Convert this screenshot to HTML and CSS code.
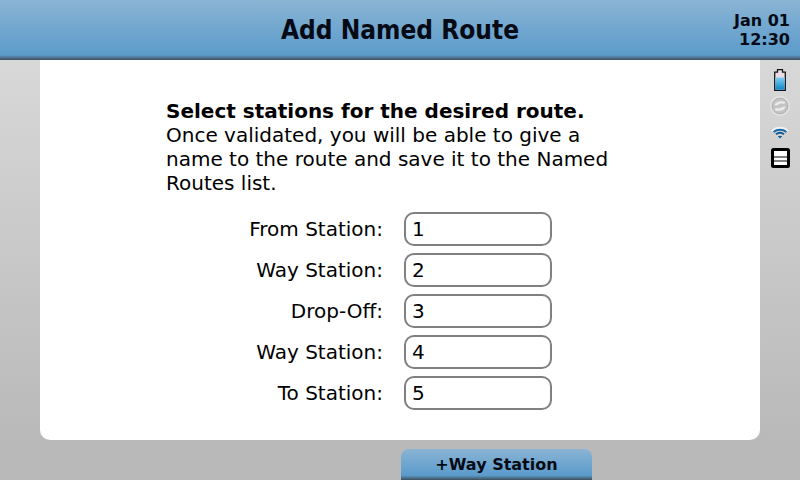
FILE: index.html
```html
<!DOCTYPE html>
<html>
<head>
  <title>Add Named Route</title>
  <link rel="stylesheet" href="styles.css">
</head>
<body>
  <div class="header">
    <h1 class="title">Add Named Route</h1>
    <div class="clock">Jan 01<br>12:30</div>
  </div>

  <div class="main">
    <div class="card">
      <p class="intro">
        <b>Select stations for the desired route.</b><br>
        Once validated, you will be able to give a<br>
        name to the route and save it to the Named<br>
        Routes list.
      </p>

      <div class="form">
        <label class="label">From Station:</label>
        <input class="field" type="text" value="1">
        <label class="label">Way Station:</label>
        <input class="field" type="text" value="2">
        <label class="label">Drop-Off:</label>
        <input class="field" type="text" value="3">
        <label class="label">Way Station:</label>
        <input class="field" type="text" value="4">
        <label class="label">To Station:</label>
        <input class="field" type="text" value="5">
      </div>
    </div>

    <div class="status">
      <!-- battery -->
      <svg width="12" height="22" viewBox="0 0 12 22">
        <defs>
          <linearGradient id="charge" x1="0" y1="0" x2="0" y2="1">
            <stop offset="0" stop-color="#7fd0f0"/>
            <stop offset="1" stop-color="#0f86c8"/>
          </linearGradient>
        </defs>
        <path d="M3.500 .7h5v2.500h2.800v18.100h-10.600v-18.100h2.800z" fill="#ecdde4" stroke="#151515" stroke-width="1.300"/>
        <rect x="1.300" y="8.500" width="9.400" height="12.200" fill="url(#charge)"/>
      </svg>
      <!-- sync, disabled -->
      <svg width="20" height="20" viewBox="0 0 20 20">
        <circle cx="10" cy="10" r="9.200" fill="#c4c4c4" stroke="#e6e6e6" stroke-width="1.400"/>
        <circle cx="10" cy="10" r="7.800" fill="none" stroke="#b4b4b4" stroke-width="1"/>
        <path d="M4.500 9.500c.3-3.800 7-5.500 11-3.500l-1.500 2c-2.500-.8-5-.5-5.800 1z" fill="#ececec"/>
        <path d="M15.500 10.500c-.3 3.800-7 5.500-11 3.500l1.500-2c2.500.8 5 .5 5.800-1z" fill="#ececec"/>
      </svg>
      <!-- wifi -->
      <svg class="wifi" width="18" height="13" viewBox="0 0 18 13">
        <path d="M1 5c4.500-4.200 11.500-4.200 16 0" fill="none" stroke="#f2f2f2" stroke-width="2"/>
        <path d="M2.500 6c3.700-3 9.300-3 13 0" fill="none" stroke="#1a6ba6" stroke-width="2"/>
        <path d="M5 8.300c2.400-1.800 5.600-1.800 8 0" fill="none" stroke="#0f5a94" stroke-width="2"/>
        <path d="M6.800 10.300l2.200 2.200 2.200-2.200c-1.300-.8-3.100-.8-4.400 0z" fill="#0f5a94"/>
      </svg>
      <!-- list -->
      <svg class="list" width="19" height="20" viewBox="0 0 19 20">
        <rect width="19" height="20" rx="2.500" fill="#000000"/>
        <rect x="3" y="3" width="13" height="5.500" fill="#ffffff"/>
        <rect x="3" y="9.500" width="13" height="3" fill="#ffffff"/>
        <rect x="3" y="13.500" width="13" height="3.500" fill="#ffffff"/>
      </svg>
    </div>
  </div>

  <div class="footer">
    <button class="button">+Way Station</button>
  </div>
</body>
</html>
```

FILE: styles.css
```css
html, body {
  height: 100%;
}

body {
  margin: 0;
  width: 800px;
  height: 480px;
  overflow: hidden;
  display: flex;
  flex-direction: column;
  font-family: "DejaVu Sans", sans-serif;
  color: #000000;
  background: linear-gradient(to bottom, #d8d8d8 60px, #b9b9b9 440px);
}

.header {
  height: 60px;
  box-sizing: border-box;
  flex: none;
  display: flex;
  align-items: center;
  justify-content: center;
  position: relative;
  background: linear-gradient(to bottom, #8ab4d4, #5b9bcb 92%, #5a8db5 93%, #3e4f5c 100%);
}

.title {
  margin: 0;
  font-family: "DejaVu Sans Condensed", "DejaVu Sans", sans-serif;
  font-size: 26px;
  font-weight: bold;
  color: #050a14;
}

.clock {
  position: absolute;
  top: 11px;
  right: 10px;
  font-size: 16px;
  font-weight: bold;
  line-height: 19px;
  text-align: right;
  color: #050a14;
}

.main {
  height: 380px;
  flex: none;
  display: flex;
}

.card {
  width: 720px;
  margin-left: 40px;
  box-sizing: border-box;
  padding: 39px 0 0 126px;
  background-color: #ffffff;
  border-radius: 0 0 10px 10px;
}

.intro {
  margin: 0 0 17px 0;
  font-size: 20px;
  line-height: 24px;
}

.form {
  display: grid;
  grid-template-columns: 217px 148px;
  column-gap: 21px;
  row-gap: 7px;
  align-items: center;
}

.label {
  font-size: 20px;
  text-align: right;
}

.field {
  width: 100%;
  height: 34px;
  box-sizing: border-box;
  padding: 0 6px;
  font-family: inherit;
  font-size: 20px;
  color: #000000;
  background-color: #ffffff;
  border: 2px solid #808080;
  border-radius: 10px;
  outline: none;
}

.status {
  width: 40px;
  display: flex;
  flex-direction: column;
  align-items: center;
  padding-top: 9px;
  gap: 5px;
}

.wifi {
  margin-top: 5px;
}

.list {
  margin-top: 4px;
}

.footer {
  flex: 1;
  display: flex;
  padding: 9px 0 0 401px;
}

.button {
  width: 191px;
  height: 31px;
  padding: 0 0 1px 0;
  border: none;
  border-radius: 8px 8px 0 0;
  font-family: inherit;
  font-size: 16px;
  font-weight: bold;
  color: #050a14;
  background: linear-gradient(to bottom, #8ab4d4, #5b9bcb 85%, #3e4f5c 100%);
}
```
